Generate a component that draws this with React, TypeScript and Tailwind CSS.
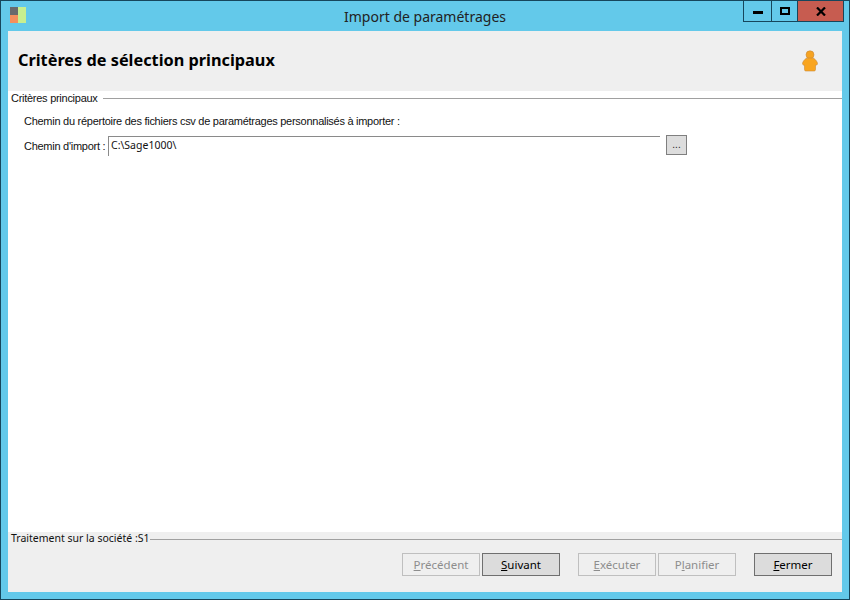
import React from 'react';

function Logo() {
  return (
    <svg width="17" height="17" viewBox="0 0 17 17" className="shrink-0">
      <rect x="0" y="0" width="8" height="8" fill="#6a6a6c" />
      <rect x="0" y="8" width="8" height="8" fill="#f58f5d" />
      <rect x="8" y="0" width="8" height="16" fill="#c8ef8f" />
    </svg>
  );
}

function Person() {
  return (
    <svg width="18" height="22" viewBox="0 0 18 22">
      <circle cx="9" cy="4.8" r="4" fill="#f6a321" stroke="#c98a3a" strokeWidth="0.6" />
      <path
        d="M5 8.5 C6.5 7.8 11.5 7.8 13 8.5 C14.5 9.5 16.5 12 16.5 13.5 C16.5 15 15 15.5 14.5 15 L14.5 19.5 C14.5 20.5 13.8 21 13 21 L5 21 C4.2 21 3.5 20.5 3.5 19.5 L3.5 15 C3 15.5 1.5 15 1.5 13.5 C1.5 12 3.5 9.5 5 8.5 Z"
        fill="#f9a51f"
        stroke="#c98a3a"
        strokeWidth="0.6"
      />
    </svg>
  );
}

function WizardButton({ mnemonic, rest, prefix, disabled }: { mnemonic: string; rest: string; prefix?: string; disabled?: boolean }) {
  return (
    <button
      className={
        disabled
          ? 'w-[78px] h-[23px] border border-[#bfbfbf] bg-[#efefef] text-[#8d8d8d] text-[11.5px] flex items-center justify-center'
          : 'w-[78px] h-[23px] border border-[#6f6f6f] bg-[#dcdcdc] text-[#000] text-[11.5px] flex items-center justify-center'
      }
    >
      <span>
        {prefix}
        <span className="underline">{mnemonic}</span>
        {rest}
      </span>
    </button>
  );
}

export default function App() {
  return (
    <div className="w-[850px] h-[600px] flex flex-col bg-[#63c9ea] border border-[#16465c] font-['Noto_Sans','Liberation_Sans',sans-serif] text-black overflow-hidden">
      <div className="h-[30px] shrink-0 relative flex items-center justify-center">
        <div className="absolute left-[9px] top-[6px]">
          <Logo />
        </div>
        <span className="text-[14px] text-[#222] pt-[1px]">Import de paramétrages</span>
        <div className="absolute left-[742px] top-[-1px] h-[22px] flex border border-[#16465c]">
          <div className="w-[28px] border-r border-[#16465c] flex items-center justify-center">
            <div className="w-[10px] h-[3px] bg-black mt-[3px]" />
          </div>
          <div className="w-[26px] border-r border-[#16465c] flex items-center justify-center">
            <div className="w-[10px] h-[8px] border-2 border-black" />
          </div>
          <div className="w-[45px] bg-[#c75c50] flex items-center justify-center">
            <svg width="10" height="9" viewBox="0 0 10 9">
              <path d="M1 0.5 L9 8.5 M9 0.5 L1 8.5" stroke="#000" strokeWidth="2.2" />
            </svg>
          </div>
        </div>
      </div>

      <div className="mx-[7px] h-[561px] flex flex-col bg-white">
        <div className="h-[60px] shrink-0 bg-[#efefef] flex items-center justify-between pl-[10px] pr-[23px]">
          <h1 className="text-[16.3px] font-bold text-black mt-[-1px]">Critères de sélection principaux</h1>
          <Person />
        </div>

        <div className="flex-1 flex flex-col font-['Liberation_Sans',sans-serif]">
          <div className="flex items-center h-[14px] pl-[3px] gap-[5px]">
            <span className="text-[11px] tracking-[-0.27px] text-[#111] whitespace-nowrap">Critères principaux</span>
            <div className="flex-1 h-px bg-[#a0a0a0]" />
          </div>
          <p className="text-[11px] tracking-[-0.27px] text-[#111] pl-[16px] mt-[8px] leading-[16px]">
            Chemin du répertoire des fichiers csv de paramétrages personnalisés à importer :
          </p>
          <div className="flex items-start pl-[16px] mt-[7px]">
            <span className="w-[84px] text-[11px] tracking-[-0.27px] text-[#111] leading-[16px] pt-[2px] whitespace-nowrap">Chemin d'import :</span>
            <div className="w-[552px] h-[20px] border-t border-l border-[#8a8a8a] text-[10.5px] text-[#111] pl-[2px] leading-[16px] font-['Noto_Sans',sans-serif]">
              C:\Sage1000\
            </div>
            <button className="ml-[6px] mt-[-1px] w-[21px] h-[20px] border border-[#7f7f7f] bg-[#dddddd] text-[10px] leading-[18px] text-[#222]">
              ...
            </button>
          </div>
        </div>

        <div className="h-[60px] shrink-0 bg-[#efefef] flex flex-col">
          <div className="flex items-center h-[14px] pl-[3px] mt-[0px]">
            <span className="text-[10.5px] text-[#111] whitespace-nowrap">Traitement sur la société :S1</span>
            <div className="flex-1 h-px bg-[#a0a0a0]" />
          </div>
          <div className="flex justify-end pr-[10px] mt-[7px]">
            <WizardButton mnemonic="P" rest="récédent" disabled />
            <div className="w-[2px]" />
            <WizardButton mnemonic="S" rest="uivant" />
            <div className="w-[18px]" />
            <WizardButton mnemonic="E" rest="xécuter" disabled />
            <div className="w-[2px]" />
            <WizardButton prefix="P" mnemonic="l" rest="anifier" disabled />
            <div className="w-[18px]" />
            <WizardButton mnemonic="F" rest="ermer" />
          </div>
        </div>
      </div>
    </div>
  );
}
